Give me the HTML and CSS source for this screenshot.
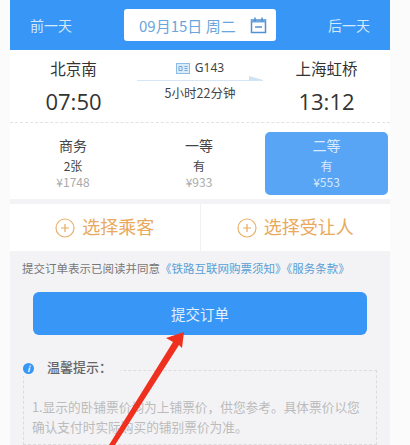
FILE: index.html
```html
<!DOCTYPE html>
<html lang="zh-CN">
<head>
	<meta charset="UTF-8">
	<title>提交订单</title>
	<link rel="stylesheet" href="styles.css">
</head>
<body>
	<div id="warp">
		<div class="date-bar">
			<div class="day-btn">前一天</div>
			<div class="date-box">
				<span class="date-text">09月15日 周二</span>
				<svg class="cal-icon" width="17" height="18" viewBox="0 0 17 18">
					<path d="M1.500 4h14v12.500h-14z" fill="none" stroke="#4f91d2" stroke-width="1.500"/>
					<path d="M1.500 4h14v2.500h-14z" fill="#6ea6dc"/>
					<path d="M5 1.500v4M12 1.500v4" stroke="#4f91d2" stroke-width="1.500"/>
					<path d="M5 11h7" stroke="#4f91d2" stroke-width="1.500"/>
				</svg>
			</div>
			<div class="day-btn">后一天</div>
		</div>

		<div class="train">
			<div class="station">
				<p class="name">北京南</p>
				<p class="time">07:50</p>
			</div>
			<div class="route">
				<p class="train-no">
					<svg width="14" height="11" viewBox="0 0 14 11">
						<rect x="0.5" y="0.5" width="13" height="10" fill="#dcebf8" stroke="#8dbce6"/>
						<path d="M3 3.500h3v4H3zM8.500 3.500h3M8.500 5.500h3M8.500 7.500h3" fill="none" stroke="#6ea8dc"/>
					</svg>
					G143
				</p>
				<div class="arrow-line"></div>
				<p class="duration">5小时22分钟</p>
			</div>
			<div class="station">
				<p class="name">上海虹桥</p>
				<p class="time">13:12</p>
			</div>
		</div>

		<ul class="seats">
			<li>
				<p class="seat-name">商务</p>
				<p class="seat-left">2张</p>
				<p class="seat-price">¥1748</p>
			</li>
			<li>
				<p class="seat-name">一等</p>
				<p class="seat-left">有</p>
				<p class="seat-price">¥933</p>
			</li>
			<li class="active">
				<p class="seat-name">二等</p>
				<p class="seat-left">有</p>
				<p class="seat-price">¥553</p>
			</li>
		</ul>

		<div class="choose">
			<div class="choose-item">
				<svg width="20" height="20" viewBox="0 0 20 20">
					<circle cx="10" cy="10" r="9" fill="none" stroke="#e9b26c" stroke-width="1.2"/>
					<path d="M10 6v8M6 10h8" stroke="#e9a95c" stroke-width="1.2"/>
				</svg>
				<span>选择乘客</span>
			</div>
			<div class="choose-item">
				<svg width="20" height="20" viewBox="0 0 20 20">
					<circle cx="10" cy="10" r="9" fill="none" stroke="#e9b26c" stroke-width="1.2"/>
					<path d="M10 6v8M6 10h8" stroke="#e9a95c" stroke-width="1.2"/>
				</svg>
				<span>选择受让人</span>
			</div>
		</div>

		<p class="agree">提交订单表示已阅读并同意<a>《铁路互联网购票须知》《服务条款》</a></p>

		<div class="submit">提交订单</div>

		<div class="tips">
			<div class="tips-title">
				<i class="info">i</i>
				<span>温馨提示：</span>
			</div>
			<div class="tips-box">1.显示的卧铺票价均为上铺票价，供您参考。具体票价以您确认支付时实际购买的铺别票价为准。</div>
		</div>

		<svg class="red-arrow" width="90" height="115" viewBox="0 0 90 115">
			<path d="M84 2 L66 8 L73 12 L9 115 L15 115 L79 15 L82 18 Z" fill="#f0301f"/>
		</svg>
	</div>
</body>
</html>
```

FILE: styles.css
```css
*{margin: 0;padding: 0;}
html,body{
	height: 100%;
	overflow: hidden;
	background-color: #fbfbfb;
}
li{
	list-style: none;
}
#warp{
	position: relative;
	width: 380px;
	height: 445px;
	margin-left: 10px;
	overflow: hidden;
	background-color: #f3f3f6;
	font-family: "Noto Sans CJK SC", "Noto Sans", sans-serif;
}
.date-bar{
	display: flex;
	align-items: center;
	justify-content: space-between;
	height: 50px;
	padding: 0 20px;
	box-sizing: border-box;
	background-color: #3796f6;
}
.day-btn{
	font-size: 14px;
	color: #d5e8fc;
}
.date-box{
	display: flex;
	align-items: center;
	justify-content: space-between;
	box-sizing: border-box;
	width: 152px;
	height: 32px;
	padding: 0 9px 0 15px;
	border-radius: 3px;
	background-color: #fff;
}
.date-text{
	font-size: 15px;
	color: #6aa5dc;
	white-space: nowrap;
}
.train{
	display: flex;
	height: 73px;
	background-color: #fff;
	border-bottom: 1px dashed #e2e2e2;
	box-sizing: border-box;
}
.station{
	flex: 1;
	text-align: center;
	color: #333;
}
.station .name{
	margin-top: 6px;
	font-size: 15.500px;
	line-height: 24px;
}
.station .time{
	margin-top: 6px;
	font-size: 22px;
	line-height: 30px;
	font-family: "Open Sans", sans-serif;
}
.route{
	flex: none;
	width: 126px;
	text-align: center;
	color: #444;
}
.train-no{
	display: flex;
	align-items: center;
	justify-content: center;
	gap: 5px;
	margin-top: 8px;
	font-size: 12px;
	line-height: 20px;
	font-family: "Noto Sans", sans-serif;
}
.arrow-line{
	position: relative;
	height: 1px;
	margin: 2px 0 3px;
	background-color: #d6e6f5;
}
.arrow-line:after{
	content: "";
	position: absolute;
	right: 0;
	top: -4px;
	border-left: 14px solid #cfe2f4;
	border-top: 4px solid transparent;
	border-bottom: 1px solid transparent;
}
.duration{
	font-size: 12.500px;
	line-height: 18px;
}
.seats{
	display: flex;
	height: 76px;
	padding: 9px 2px 4px 0;
	box-sizing: border-box;
	background-color: #fff;
}
.seats li{
	flex: 1;
	text-align: center;
	border-radius: 5px;
	color: #444;
}
.seat-name{
	font-size: 14px;
	line-height: 22px;
	margin-top: 2px;
}
.seat-left{
	font-size: 12px;
	line-height: 19px;
}
.seat-price{
	font-size: 12px;
	line-height: 14px;
	color: #aaa;
}
.seats li.active{
	flex: none;
	width: 123px;
	margin-left: 3px;
	background-color: #58a5f6;
	color: #d9eafc;
}
.seats li.active .seat-price{
	color: #d9eafc;
}
.choose{
	display: flex;
	height: 47px;
	margin-top: 5px;
	background-color: #fff;
}
.choose-item{
	flex: 1;
	display: flex;
	align-items: center;
	justify-content: center;
	gap: 7px;
	font-size: 18px;
	color: #e9a95c;
}
.choose-item span{
	margin-bottom: 3px;
}
.choose-item + .choose-item{
	border-left: 1px solid #f1f1f1;
}
.agree{
	margin: 8px 0 0 12px;
	font-size: 11.500px;
	line-height: 18px;
	color: #777;
	white-space: nowrap;
}
.agree a{
	color: #5a9fd4;
}
.submit{
	width: 334px;
	height: 43px;
	margin: 15px auto 0;
	border-radius: 6px;
	text-align: center;
	line-height: 44px;
	font-size: 14.500px;
	color: #e3f0fd;
	background-color: #3796f6;
}
.tips{
	position: relative;
	margin: 21px 0 0 13px;
}
.tips-title{
	position: relative;
	display: flex;
	align-items: center;
	gap: 13px;
	width: 97px;
	height: 20px;
	background-color: #f3f3f6;
	font-size: 13px;
	font-weight: 500;
	color: #666;
	white-space: nowrap;
}
.info{
	width: 11px;
	height: 11px;
	margin-top: 4px;
	border-radius: 50%;
	text-align: center;
	font-size: 8px;
	line-height: 11px;
	font-weight: bold;
	color: #fff;
	background-color: #3796f6;
}
.tips-box{
	box-sizing: border-box;
	width: 354px;
	height: 75px;
	margin-top: -6px;
	padding: 26px 14px 0 8px;
	border: 1px dashed #dcdcdc;
	font-size: 12.700px;
	line-height: 20px;
	color: #bbb;
}
.red-arrow{
	position: absolute;
	left: 90px;
	top: 330px;
}
```
